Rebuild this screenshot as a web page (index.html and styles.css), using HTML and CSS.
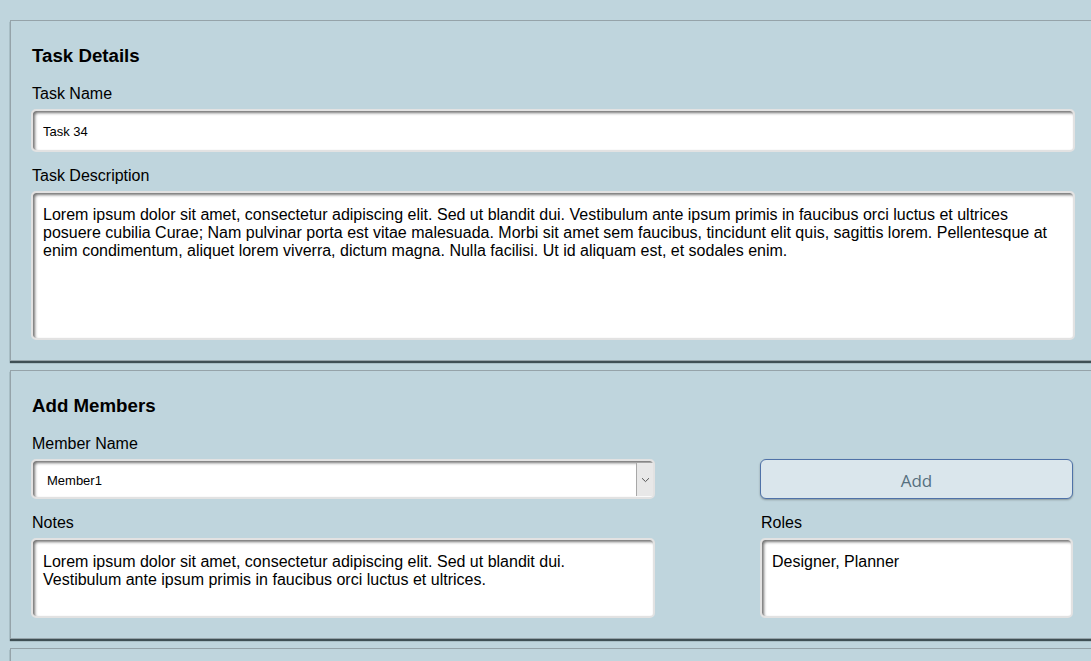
FILE: index.html
```html
<!DOCTYPE html>
<html>
<head>
<meta charset="utf-8">
<link rel="stylesheet" href="styles.css">
</head>
<body>
<div class="page">
  <section class="panel">
    <h2 class="panel-title">Task Details</h2>
    <label class="field-label">Task Name</label>
    <input class="text-input" type="text" value="Task 34">
    <label class="field-label gap-top">Task Description</label>
    <textarea class="text-area desc" readonly>Lorem ipsum dolor sit amet, consectetur adipiscing elit. Sed ut blandit dui. Vestibulum ante ipsum primis in faucibus orci luctus et ultrices posuere cubilia Curae; Nam pulvinar porta est vitae malesuada. Morbi sit amet sem faucibus, tincidunt elit quis, sagittis lorem. Pellentesque at enim condimentum, aliquet lorem viverra, dictum magna. Nulla facilisi. Ut id aliquam est, et sodales enim.</textarea>
  </section>
  <section class="panel">
    <h2 class="panel-title">Add Members</h2>
    <div class="member-grid">
      <div class="cell">
        <label class="field-label">Member Name</label>
        <div class="select">
          <span class="select-value">Member1</span>
          <span class="select-arrow">
            <svg width="9" height="6" viewBox="0 0 9 6"><path d="M1 1.2 L4.5 4.6 L8 1.2" fill="none" stroke="#555" stroke-width="1"/></svg>
          </span>
        </div>
      </div>
      <div class="cell cell-end">
        <button class="add-btn">Add</button>
      </div>
      <div class="cell">
        <label class="field-label gap-top">Notes</label>
        <textarea class="text-area short" readonly>Lorem ipsum dolor sit amet, consectetur adipiscing elit. Sed ut blandit dui. Vestibulum ante ipsum primis in faucibus orci luctus et ultrices.</textarea>
      </div>
      <div class="cell">
        <label class="field-label gap-top">Roles</label>
        <textarea class="text-area short" readonly>Designer, Planner</textarea>
      </div>
    </div>
  </section>
  <section class="panel panel-empty"></section>
</div>
</body>
</html>
```

FILE: styles.css
```css
html, body {
  margin: 0;
  padding: 0;
  overflow: hidden;
  background: #bfd5dd;
}
body {
  font-family: "Liberation Sans", Arial, sans-serif;
  color: #000;
  width: 1091px;
  height: 661px;
}
.page {
  padding: 20px 0 0 10px;
  width: 1086px;
  display: flex;
  flex-direction: column;
  gap: 9px;
}
.panel {
  width: 1086px;
  box-sizing: border-box;
  border: 1px solid #95a3a9;
  border-right: none;
  padding: 24px 21px 20px 20px;
  box-shadow: 0 2px 1px rgba(40, 55, 60, 0.85);
  display: flex;
  flex-direction: column;
  background: #bfd5dd;
}
.panel-empty {
  height: 120px;
}
.panel-title {
  margin: 0 0 18px 1px;
  font-size: 18.7px;
  line-height: 22px;
  font-weight: bold;
}
.field-label {
  display: block;
  font-size: 16px;
  line-height: 18px;
  margin: 0 0 6px 1px;
}
.gap-top {
  margin-top: 15px;
}
.text-input {
  box-sizing: border-box;
  height: 43px;
  width: 100%;
  border: 2px solid #e2e2e2;
  border-radius: 5px;
  box-shadow: inset 2px 2px 3px rgba(0, 0, 0, 0.55);
  background: #fff;
  font-family: "Liberation Sans", Arial, sans-serif;
  font-size: 13px;
  padding: 1px 10px 0 10px;
  color: #000;
  outline: none;
}
.text-area {
  display: block;
  box-sizing: border-box;
  width: 100%;
  border: 2px solid #e2e2e2;
  border-radius: 5px;
  box-shadow: inset 2px 2px 3px rgba(0, 0, 0, 0.55);
  background: #fff;
  font-family: "Liberation Sans", Arial, sans-serif;
  font-size: 16px;
  line-height: 18px;
  padding: 13px 10px 11px 10px;
  color: #000;
  resize: none;
  outline: none;
  overflow: hidden;
  margin: 0;
}
.desc {
  height: 149px;
}
.short {
  height: 80px;
}
.member-grid {
  display: grid;
  grid-template-columns: 624px 313px;
  column-gap: 105px;
}
.cell {
  display: flex;
  flex-direction: column;
}
.cell-end {
  justify-content: flex-end;
}
.select {
  box-sizing: border-box;
  height: 40px;
  border: 2px solid #e2e2e2;
  border-radius: 5px;
  box-shadow: inset 2px 2px 3px rgba(0, 0, 0, 0.55);
  background: #fff;
  display: flex;
  align-items: stretch;
}
.select-value {
  flex: 1;
  font-size: 13px;
  padding: 3px 0 0 14px;
  display: flex;
  align-items: center;
}
.select-arrow {
  width: 16px;
  border-left: 1px solid #a8a8a8;
  background: #e8e8e8;
  display: flex;
  align-items: center;
  justify-content: center;
  margin: 2px 0 1px 0;
}
.add-btn {
  box-sizing: border-box;
  height: 40px;
  width: 100%;
  border: 1px solid #4f72a8;
  border-radius: 6px;
  background: #dae6ec;
  color: #56707f;
  font-family: "Open Sans", "Noto Sans", sans-serif;
  font-size: 17px;
  box-shadow: 0 1px 2px rgba(0, 0, 0, 0.3);
  padding: 3px 0 0 0;
}
```
